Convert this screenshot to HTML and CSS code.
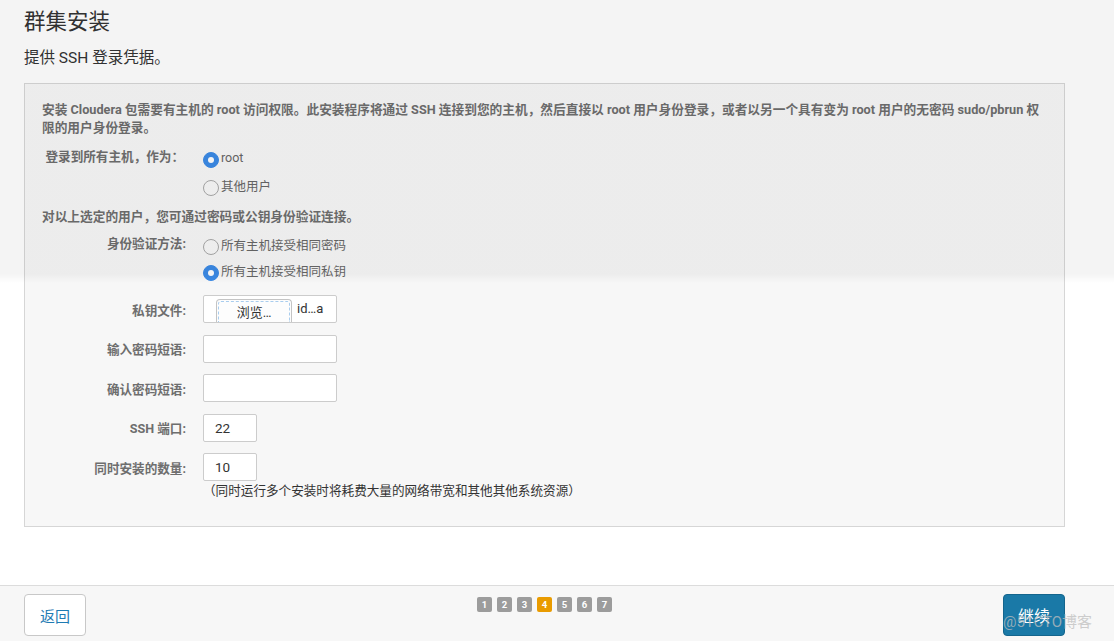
FILE: index.html
```html
<!DOCTYPE html>
<html lang="zh-CN">
<head>
<meta charset="utf-8">
<title>群集安装</title>
<link rel="stylesheet" href="styles.css">
</head>
<body>
<div class="page">
  <main class="main">
    <h1 class="title">群集安装</h1>
    <p class="subtitle">提供 SSH 登录凭据。</p>
    <section class="panel">
      <p class="note">安装 Cloudera 包需要有主机的 root 访问权限。此安装程序将通过 SSH 连接到您的主机，然后直接以 root 用户身份登录，或者以另一个具有变为 root 用户的无密码 sudo/pbrun 权限的用户身份登录。</p>
      <div class="row row-login">
        <div class="label">登录到所有主机，作为：</div>
        <div class="options">
          <label class="opt"><span class="radio checked"></span>root</label>
          <label class="opt"><span class="radio"></span>其他用户</label>
        </div>
      </div>
      <p class="note note2">对以上选定的用户，您可通过密码或公钥身份验证连接。</p>
      <div class="row row-auth">
        <div class="label">身份验证方法:</div>
        <div class="options">
          <label class="opt"><span class="radio"></span>所有主机接受相同密码</label>
          <label class="opt"><span class="radio checked"></span>所有主机接受相同私钥</label>
        </div>
      </div>
      <div class="row row-field row-file">
        <div class="label">私钥文件:</div>
        <div class="file">
          <span class="file-btn"><span class="file-btn-in">浏览…</span></span>
          <span class="file-name">id…a</span>
        </div>
      </div>
      <div class="row row-field">
        <div class="label">输入密码短语:</div>
        <div class="input wide"></div>
      </div>
      <div class="row row-field">
        <div class="label">确认密码短语:</div>
        <div class="input wide"></div>
      </div>
      <div class="row row-field">
        <div class="label">SSH 端口:</div>
        <div class="input narrow">22</div>
      </div>
      <div class="row row-field">
        <div class="label">同时安装的数量:</div>
        <div class="input narrow">10</div>
      </div>
      <p class="hint">（同时运行多个安装时将耗费大量的网络带宽和其他其他系统资源）</p>
    </section>
  </main>
  <footer class="footer">
    <div class="footer-inner">
      <div class="f-left"><button class="btn btn-back">返回</button></div>
      <div class="steps">
        <span class="step">1</span><span class="step">2</span><span class="step">3</span><span class="step active">4</span><span class="step">5</span><span class="step">6</span><span class="step">7</span>
      </div>
      <div class="f-right"><button class="btn btn-next">继续</button></div>
    </div>
  </footer>
</div>
<div class="shade"></div>
<div class="watermark">@51CTO博客</div>
</body>
</html>
```
FILE: styles.css
```css
* { box-sizing: border-box; }
html, body { margin: 0; padding: 0; }
body {
  font-family: Roboto, "Noto Sans CJK SC", sans-serif;
  color: #333;
  background: #fff;
  height: 641px;
  overflow: hidden;
  position: relative;
}
.page {
  display: flex;
  flex-direction: column;
  height: 641px;
}
.main {
  flex: 1;
  width: 1041px;
  margin-left: 24px;
}
.title {
  margin: 0;
  padding-top: 7px;
  font-size: 21.5px;
  line-height: 30px;
  font-weight: normal;
  color: #333;
}
.subtitle {
  margin: 10px 0 0;
  font-size: 15.5px;
  line-height: 22px;
  color: #333;
}
.panel {
  margin-top: 14px;
  border: 1px solid #d6d6d6;
  background: #f7f7f7;
  padding: 17px 17px 27px;
}
.note {
  margin: 0;
  font-size: 12.7px;
  line-height: 18px;
  font-weight: bold;
  color: #6e6e6e;
}
.note2 { margin-top: 9px; }
.row { display: flex; }
.label {
  width: 144px;
  flex: none;
  text-align: right;
  white-space: nowrap;
  font-size: 12.6px;
  font-weight: bold;
  color: #6e6e6e;
  margin-right: 17px;
}
.row-login { margin-top: 6px; }
.row-login .label { line-height: 28px; padding-right: 2px; }
.row-login .opt { height: 28px; }
.row-auth { margin-top: 5px; }
.row-auth .label { line-height: 26px; }
.row-auth .opt { height: 26px; }
.options { display: flex; flex-direction: column; }
.opt {
  display: flex;
  align-items: center;
  font-size: 12.5px;
  color: #666;
  white-space: nowrap;
}
.radio {
  width: 16px;
  height: 16px;
  border-radius: 50%;
  border: 1px solid #a8a8a8;
  background: #f8f8f8;
  margin-top: 5px;
  margin-right: 2px;
  flex: none;
  position: relative;
}
.radio.checked {
  border-color: #3b8ae6;
  background: #3b8ae6;
}
.radio.checked::after {
  content: "";
  position: absolute;
  left: 4px;
  top: 4px;
  width: 6px;
  height: 6px;
  border-radius: 50%;
  background: #fff;
}
.row-field { align-items: center; margin-top: 11.5px; }
.row-file { margin-top: 12px; }
.file {
  width: 134px;
  height: 28px;
  border: 1px solid #ccc;
  border-radius: 2px;
  background: #fff;
  display: flex;
  align-items: flex-end;
  overflow: hidden;
  padding-left: 12px;
}
.file-btn {
  width: 76px;
  height: 24px;
  margin-bottom: -1px;
  border: 1px solid #c4c4c4;
  border-bottom: none;
  border-radius: 4px 4px 0 0;
  background: #fdfdfd;
  padding: 1px;
  flex: none;
}
.file-btn-in {
  display: block;
  height: 100%;
  border: 1px dashed #a9cdee;
  border-bottom: none;
  border-radius: 3px 3px 0 0;
  font-size: 13px;
  line-height: 22px;
  text-align: center;
  color: #333;
}
.file-name {
  font-size: 13px;
  line-height: 26px;
  margin-left: 5px;
  align-self: center;
  color: #333;
}
.input {
  height: 28px;
  border: 1px solid #ccc;
  border-radius: 2px;
  background: #fff;
  font-size: 13.5px;
  line-height: 26px;
  padding-left: 11px;
  color: #333;
}
.input.wide { width: 134px; }
.input.narrow { width: 54px; }
.hint {
  margin: 2px 0 0 161px;
  font-size: 12.6px;
  line-height: 16px;
  color: #333;
}
.footer {
  flex: none;
  height: 56px;
  border-top: 1px solid #dcdcdc;
  background: #f7f7f7;
  padding-top: 8px;
}
.footer-inner {
  width: 1041px;
  margin-left: 24px;
  display: grid;
  grid-template-columns: 1fr auto 1fr;
  align-items: start;
}
.f-right { display: flex; justify-content: flex-end; }
.btn {
  width: 62px;
  height: 42px;
  border-radius: 4px;
  font-family: Roboto, "Noto Sans CJK SC", sans-serif;
  padding: 0;
  cursor: pointer;
}
.btn-back {
  background: #fff;
  border: 1px solid #c8c8c8;
  color: #1f7bb3;
  font-size: 15px;
}
.btn-next {
  background: #1a79a7;
  border: 1px solid #14658d;
  color: #fff;
  font-size: 16px;
}
.steps {
  display: flex;
  gap: 4.7px;
  margin-top: 3px;
}
.step {
  width: 15.3px;
  height: 15px;
  border-radius: 2px;
  background: #9c9c9c;
  color: #fff;
  font-size: 9.5px;
  font-weight: bold;
  line-height: 15px;
  text-align: center;
}
.step.active { background: #e99b00; }
.shade {
  position: absolute;
  left: 0;
  top: 0;
  width: 100%;
  height: 283px;
  pointer-events: none;
  background: linear-gradient(to bottom, rgba(0,0,0,0.043) 0, rgba(0,0,0,0.043) 274px, rgba(0,0,0,0) 283px);
}
.watermark {
  position: absolute;
  right: 22px;
  bottom: 9px;
  font-size: 15px;
  line-height: 20px;
  color: rgba(190,190,190,0.75);
  pointer-events: none;
}
```
